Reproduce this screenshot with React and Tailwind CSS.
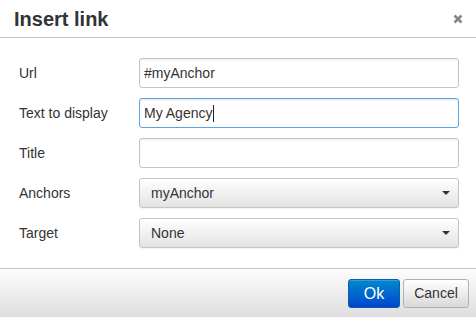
const FONT = { fontFamily: '"Liberation Sans", Arial, sans-serif' }

function TextBox({ value, focused }) {
  return (
    <div
      className={
        'flex h-[30px] w-[320px] items-center rounded-[3px] border bg-white px-[4px] text-[14px] text-[#333] ' +
        (focused ? 'border-[#59a5e5] shadow-[inset_0_1px_2px_rgba(0,0,0,0.1)]' : 'border-[#c5c5c5] shadow-[inset_0_1px_2px_rgba(0,0,0,0.08)]')
      }
    >
      <span>{value}</span>
      {focused && <span className="ml-px inline-block h-[17px] w-px bg-[#222]" />}
    </div>
  )
}

function SelectBox({ value }) {
  return (
    <div className="flex h-[30px] w-[320px] items-center justify-between rounded-[3px] border border-[#c5c5c5] bg-gradient-to-b from-white to-[#e3e3e3] pl-[11px] pr-[8px] text-[14px] text-[#333] shadow-[0_1px_1px_rgba(0,0,0,0.05)]">
      <span>{value}</span>
      <span className="h-0 w-0 border-l-[4px] border-r-[4px] border-t-[4px] border-l-transparent border-r-transparent border-t-[#333]" />
    </div>
  )
}

const rows = [
  { label: 'Url', type: 'text', value: '#myAnchor' },
  { label: 'Text to display', type: 'text', value: 'My Agency', focused: true },
  { label: 'Title', type: 'text', value: '' },
  { label: 'Anchors', type: 'select', value: 'myAnchor' },
  { label: 'Target', type: 'select', value: 'None' },
]

export default function App() {
  return (
    <div className="flex h-[317px] w-[476px] flex-col bg-white text-[#333]" style={FONT}>
      <header className="flex h-[38px] items-center justify-between border-b border-[#c5c5c5] pl-[14px] pr-[13px]">
        <h1 className="text-[20px] font-bold leading-none text-[#333]">Insert link</h1>
        <svg width="10" height="10" viewBox="0 0 10 10" className="text-[#858585]">
          <path d="M1.5 1.5 L8.5 8.5 M8.5 1.5 L1.5 8.5" stroke="currentColor" strokeWidth="2.6" strokeLinecap="butt" />
        </svg>
      </header>

      <main className="flex flex-1 flex-col gap-[10px] pt-[20px]">
        {rows.map((row) => (
          <div key={row.label} className="flex h-[30px] items-center">
            <label className="w-[139px] pl-[19px] text-[14px] text-[#333]">{row.label}</label>
            {row.type === 'text' ? (
              <TextBox value={row.value} focused={row.focused} />
            ) : (
              <SelectBox value={row.value} />
            )}
          </div>
        ))}
      </main>

      <footer className="flex h-[49px] items-start justify-end gap-[3px] border-t border-[#c5c5c5] bg-gradient-to-b from-[#fdfdfd] to-[#dedede] pr-[7px] pt-[10px]">
        <button className="h-[29px] w-[52px] rounded-[3px] border border-[#0b5da8] bg-gradient-to-b from-[#0088cc] to-[#0044cc] text-[16px] text-white shadow-[inset_0_1px_0_rgba(255,255,255,0.2)]">
          Ok
        </button>
        <button className="h-[29px] w-[66px] rounded-[3px] border border-[#b1b1b1] bg-gradient-to-b from-white to-[#d9d9d9] text-[14px] text-[#333]">
          Cancel
        </button>
      </footer>
    </div>
  )
}
